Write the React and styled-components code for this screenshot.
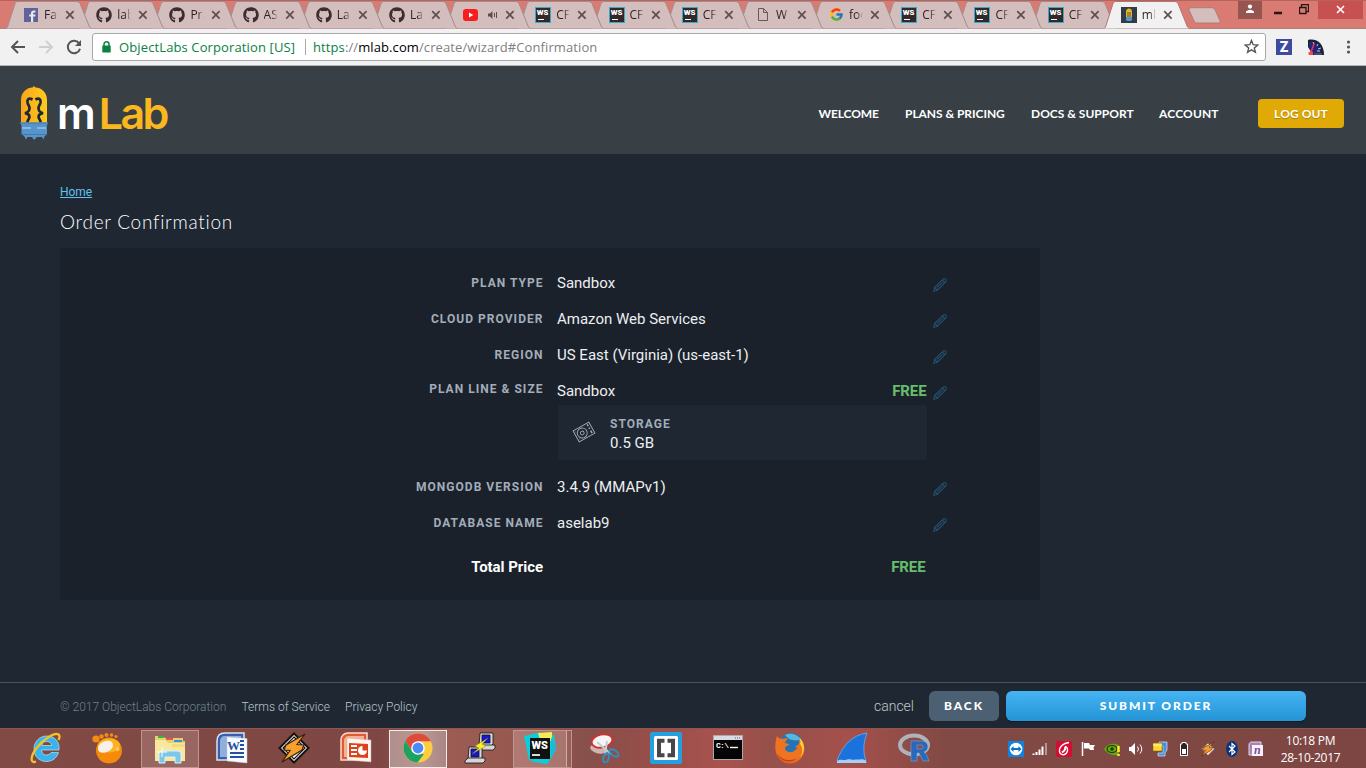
import React from 'react';
import styled, { createGlobalStyle, css } from 'styled-components';
import { FaGithub } from 'react-icons/fa';
import { FcGoogle } from 'react-icons/fc';

const Global = createGlobalStyle`
  * { box-sizing: border-box; }
  body { margin: 0; background: #1e2732; overflow: hidden; }
  svg { display: block; flex: none; }
`;

const ui = '"Open Sans", "Noto Sans", sans-serif';
const museo = 'Lato, "Open Sans", sans-serif';
const roboto = 'Roboto, "Liberation Sans", sans-serif';

const Screen = styled.div`
  width: 1366px;
  height: 768px;
  display: flex;
  flex-direction: column;
`;

/* ---------- browser tabs ---------- */
const TabStrip = styled.div`
  height: 29px;
  flex: none;
  display: flex;
  align-items: flex-start;
  padding-left: 6px;
  background: #d97b72;
  border-top: 1px solid #b4645c;
  border-bottom: 1px solid #a98280;
`;
const Tab = styled.div`
  position: relative;
  flex: none;
  width: 73.2px;
  height: 28px;
  z-index: ${(p) => p.$z};
`;
const TabShape = styled.svg`
  position: absolute;
  left: 0;
  top: 0;
`;
const TabBody = styled.div`
  position: relative;
  display: flex;
  align-items: center;
  width: 85px;
  height: 27px;
  padding-left: 17px;
`;
const TabTitle = styled.span`
  width: 14px;
  margin-left: 5px;
  overflow: hidden;
  white-space: nowrap;
  font: 12px/16px ${ui};
  color: #2c2224;
  mask-image: linear-gradient(90deg, #000 55%, transparent);
`;
const TabClose = styled.svg`
  margin-left: 7px;
`;
const NewTab = styled.svg`
  margin: 6px 0 0 11px;
`;
const WindowControls = styled.div`
  display: flex;
  margin-left: auto;
  padding-right: 3px;
`;
const ControlButton = styled.div`
  width: ${(p) => p.$w}px;
  height: 18px;
  display: flex;
  align-items: center;
  justify-content: center;
  background: ${(p) => p.$bg || 'transparent'};
`;

/* ---------- address bar ---------- */
const Toolbar = styled.div`
  height: 37px;
  flex: none;
  display: flex;
  align-items: center;
  padding: 0 0 1px 10px;
  background: #f2f1f1;
  border-bottom: 1px solid #b5b4b4;
`;
const NavIcons = styled.div`
  display: flex;
  gap: 12px;
  width: 82px;
`;
const AddressBox = styled.div`
  width: 1174px;
  height: 28px;
  display: flex;
  align-items: center;
  padding: 0 6px 0 9px;
  border: 1px solid #a7a7a7;
  border-radius: 3px;
  background: #fff;
  font: 13px/18px ${ui};
`;
const Company = styled.span`
  width: 186px;
  margin-left: 8px;
  color: #0b8043;
  letter-spacing: 0.12px;
  white-space: nowrap;
`;
const Divider = styled.span`
  width: 1px;
  height: 16px;
  margin-right: 7px;
  background: #a8a8a8;
`;
const Url = styled.span`
  flex: 1;
  color: #808080;
  letter-spacing: 0.1px;
  white-space: nowrap;
`;
const Scheme = styled.span`
  color: #0b8043;
`;
const Host = styled.span`
  color: #000;
`;
const Extensions = styled.div`
  display: flex;
  align-items: center;
  padding-left: 10px;
  gap: 16px;
`;
const ZTile = styled.div`
  width: 16px;
  height: 16px;
  background: #3c4ba0;
  color: #fff;
  text-align: center;
  font: 900 14px/16px ${roboto};
`;

/* ---------- site header ---------- */
const SiteHeader = styled.header`
  height: 88px;
  flex: none;
  display: flex;
  align-items: center;
  padding: 0 22px 0 20px;
  background: #384046;
`;
const Brand = styled.div`
  display: flex;
  align-items: center;
  height: 56px;
  padding-top: 5px;
`;
const BrandName = styled.span`
  margin-left: 9px;
  font: 600 43px/56px Inter, sans-serif;
  letter-spacing: -1px;
  color: #fff;
`;
const BrandAccent = styled.span`
  margin-left: 4px;
  letter-spacing: -2.6px;
  color: #fab71e;
`;
const SiteNav = styled.nav`
  display: flex;
  align-items: center;
  margin-left: auto;
`;
const NavLink = styled.a`
  width: ${(p) => p.$w}px;
  font: 700 12px/16px ${museo};
  letter-spacing: ${(p) => p.$ls || 0}px;
  color: #fff;
  white-space: nowrap;
  padding-top: 8px;
`;
const LogOut = styled.button`
  width: 86px;
  height: 29px;
  margin-top: 7px;
  padding: 0;
  border: 0;
  border-radius: 4px;
  background: #e0a906;
  color: #fff;
  font: 700 12px/29px ${museo};
  letter-spacing: 0.1px;
  text-shadow: 0 1px 1px rgba(0, 0, 0, 0.25);
`;

/* ---------- page body ---------- */
const Main = styled.main`
  height: 528px;
  flex: none;
  padding: 30px 60px 0;
  background: #1e2732;
`;
const Crumb = styled.a`
  display: block;
  width: max-content;
  font: 400 12px/16px ${roboto};
  letter-spacing: -0.05px;
  color: #62c1ee;
  text-decoration: underline;
`;
const Title = styled.h1`
  margin: 9px 0 13px;
  font: 300 19px/26px ${museo};
  letter-spacing: 0.72px;
  color: #fff;
`;
const Panel = styled.section`
  width: 980px;
  height: 352px;
  padding: 17px 0 0;
  border-radius: 3px;
  background: #1a212a;
`;
const Row = styled.div`
  display: flex;
  align-items: flex-start;
  height: ${(p) => p.$h || 36}px;
`;
const Label = styled.div`
  width: 484px;
  padding-top: ${(p) => (p.$raised ? 8 : 10)}px;
  padding-right: 0.5px;
  text-align: right;
  font: 700 12px/16px ${roboto};
  letter-spacing: 1.03px;
  color: #a3adba;
`;
const Value = styled.div`
  width: 370px;
  margin-left: 13px;
  padding-top: 8px;
  font: 400 15px/20px ${roboto};
  color: #eceff2;
`;
const Line = styled.div`
  display: flex;
  justify-content: space-between;
`;
const Free = styled.span`
  padding-right: 0.5px;
  font: 700 15px/20px ${roboto};
  letter-spacing: -0.1px;
  color: #67bd6c;
`;
const Edit = styled.div`
  padding: 12px 0 0 5px;
`;
const StorageCard = styled.div`
  display: flex;
  align-items: center;
  width: 369px;
  height: 55px;
  margin: 4px 0 0 1px;
  padding-left: 14px;
  border-radius: 3px;
  background: #1e2732;
`;
const DriveSlot = styled.div`
  padding-bottom: 2px;
`;
const StorageText = styled.div`
  margin-left: 14px;
  padding-top: 2px;
`;
const StorageLabel = styled.div`
  font: 700 12px/18px ${roboto};
  letter-spacing: 1.05px;
  color: #a3adba;
`;
const StorageValue = styled.div`
  font: 400 15px/20px ${roboto};
  color: #eceff2;
`;
const TotalRow = styled.div`
  display: flex;
  padding-top: 16px;
`;
const TotalLabel = styled.div`
  width: 483px;
  text-align: right;
  font: 700 15px/20px ${roboto};
  letter-spacing: -0.05px;
  color: #fff;
`;
const TotalValue = styled.div`
  width: 383px;
  text-align: right;
`;

/* ---------- page footer ---------- */
const Footer = styled.footer`
  height: 46px;
  flex: none;
  display: flex;
  align-items: center;
  padding: 0 60px;
  border-top: 1px solid #4b545e;
  background: #1e2732;
  font: 300 12px/16px ${roboto};
  color: #bcc6d0;
`;
const Copyright = styled.span`
  width: 181.5px;
  padding-top: 2px;
  color: #74808b;
`;
const FooterLink = styled.a`
  width: ${(p) => p.$w}px;
  padding-top: 2px;
  white-space: nowrap;
`;
const Cancel = styled.a`
  margin-left: auto;
  margin-right: 15px;
  font: 300 14px/18px ${roboto};
  color: #c0c7ce;
`;
const ActionButton = styled.button`
  width: ${(p) => p.$w}px;
  height: 30px;
  padding: 0;
  border: 0;
  border-radius: 6px;
  color: #fff;
  font: 900 12px/30px ${museo};
  letter-spacing: 1.9px;
  background: #4c6074;
  ${(p) =>
    p.$primary &&
    css`
      margin-left: 7px;
      background: linear-gradient(#46b4f3, #2494d6);
      box-shadow: 0 1px 1px #14181e;
    `}
`;

/* ---------- taskbar ---------- */
const Taskbar = styled.div`
  height: 40px;
  flex: none;
  display: flex;
  padding-left: 15px;
  border-top: 1px solid #8e5650;
  background: linear-gradient(90deg, #824a44 0, #7f4743 380px, #9c5c53 450px, #96584f 510px, #87504a 590px, #954e49 640px, #a9524e 720px, #96504a 770px, #a5504b 850px, #8b4b46 920px, #824a44 945px, #7d4642 1366px);
`;
const AppSlot = styled.div`
  width: 62px;
  height: 39px;
  display: flex;
  align-items: center;
  justify-content: center;
`;
const AppFrame = styled.div`
  width: 58px;
  height: 38px;
  display: flex;
  align-items: center;
  justify-content: center;
  padding-bottom: 2px;
  ${(p) =>
    p.$state &&
    css`
      border: 1px solid ${p.$state === 'active' ? '#f3ebe9' : '#bd9692'};
      background: ${p.$state === 'active' ? 'linear-gradient(90deg,#b08f8c,#b99793 60%,#a98683)' : 'rgba(255,220,215,0.2)'};
    `}
  ${(p) =>
    p.$state === 'stacked' &&
    css`
      border-right: 1px solid #bd9692;
      width: 59px;
      padding-right: 5px;
      background: linear-gradient(90deg, rgba(255,220,215,.25) 52px, #d5aaa5 52px, #d5aaa5 53px, rgba(255,220,215,.1) 53px);
    `}
`;
const Tray = styled.div`
  display: flex;
  align-items: center;
  margin-left: auto;
`;
const TraySlot = styled.div`
  width: 24px;
  display: flex;
  justify-content: center;
`;
const Clock = styled.div`
  width: 98px;
  padding: 1px 13px 0 0;
  text-align: center;
  font: 12px/17px ${ui};
  letter-spacing: -0.3px;
  color: #fff;
  white-space: nowrap;
`;

/* ---------- icons ---------- */
const Facebook = () => (
  <svg width="14" height="14" viewBox="0 0 14 14">
    <rect width="14" height="14" fill="#5e6399" />
    <path d="M9.2 14V8.6h2l.3-2H9.200V5.400c0-.7.3-1 1-1h1.300V2.500H9.700C7.900 2.500 7 3.500 7 5.200v1.400H5.200v2H7V14z" fill="#ece4ea" />
  </svg>
);
const YouTube = () => (
  <svg width="15" height="12" viewBox="0 0 15 12">
    <rect width="15" height="12" rx="3" fill="#f61e1e" />
    <path d="M6 3.500l4.300 2.500L6 8.500z" fill="#fff" />
  </svg>
);
const Speaker = () => (
  <svg width="11" height="10" viewBox="0 0 11 10">
    <path d="M1 3.500h2L5.500 1v8L3 6.500H1z" fill="#5d4b4d" />
    <path d="M7.500 3v4M9.500 2v6" stroke="#5d4b4d" fill="none" />
  </svg>
);
const WebStormTile = () => (
  <svg width="16" height="16" viewBox="0 0 16 16">
    <rect x=".5" y=".5" width="15" height="15" fill="#33282a" stroke="#2eaecb" />
    <text x="1.800" y="8.300" fontFamily="Roboto" fontWeight="900" fontSize="7.800" fill="#fff">WS</text>
    <path d="M3 12.500h6" stroke="#fff" />
  </svg>
);
const Doc = () => (
  <svg width="12" height="15" viewBox="0 0 12 15">
    <path d="M1.500 1.500h5l4 4v8h-9zM6.500 1.500v4h4" fill="none" stroke="#6a5657" />
  </svg>
);
const MiniMlab = () => (
  <svg width="16" height="16" viewBox="0 0 16 16">
    <rect width="16" height="16" fill="#303c47" />
    <path d="M5 10V5a3 3.500 0 016 0v5z" fill="#e7b52c" />
    <path d="M7 10V5M9 10V5" stroke="#463b20" strokeWidth=".8" />
    <path d="M5 10h6v3l-1 1H6l-1-1z" fill="#5096cf" />
  </svg>
);
const Close = ({ color = '#5f4e50' }) => (
  <TabClose width="10" height="10" viewBox="0 0 10 10">
    <path d="M1.200 1.200l7.400 7.400M8.600 1.200L1.200 8.600" stroke={color} strokeWidth="1.700" />
  </TabClose>
);
const Back = ({ color, flip }) => (
  <svg width="16" height="16" viewBox="0 0 16 16">
    <path d={flip ? 'M1 8h13M8 2l6 6-6 6' : 'M15 8H2M8 2L2 8l6 6'} fill="none" stroke={color} strokeWidth="2" />
  </svg>
);
const Reload = () => (
  <svg width="16" height="16" viewBox="0 0 16 16">
    <path d="M13.300 4.700A6.200 6.200 0 1014 9.700" fill="none" stroke="#555" strokeWidth="2" />
    <path d="M15 1v6H9z" fill="#555" />
  </svg>
);
const Lock = () => (
  <svg width="9" height="12" viewBox="0 0 9 12">
    <path d="M2 6V3.300a2.500 2.500 0 015 0V6" fill="none" stroke="#0b8043" strokeWidth="1.500" />
    <rect x=".3" y="4.500" width="8.400" height="7" rx=".6" fill="#0b8043" />
  </svg>
);
const Star = () => (
  <svg width="15" height="15" viewBox="0 0 15 15">
    <path d="M7.500 1.500l1.700 4.200 4.600.3-3.500 2.900 1.100 4.400-3.900-2.400-3.900 2.400 1.100-4.400L1.200 6l4.600-.3z" fill="none" stroke="#555" strokeWidth="1.400" />
  </svg>
);
const Gauge = () => (
  <svg width="16" height="16" viewBox="0 0 16 16">
    <path d="M0 8V1C9-1 16 5 16 16H5z" fill="#1d2030" />
    <path d="M1 9V3c7-1 12 4 12 11H5z" fill="#24267a" />
    <path d="M5 3l1 2M10 5L9 7M13 9l-3 1M9 12h3" stroke="#c4c8df" />
    <path d="M2.500 14L6 5" stroke="#f53545" strokeWidth="1.500" />
    <path d="M0 13.500l5-1V16H1z" fill="#f24654" />
    <path d="M6 14h8v2H6z" fill="#4c4a57" />
  </svg>
);
const Dots = () => (
  <svg width="16" height="14" viewBox="0 0 16 14">
    <circle cx="8.500" cy="2" r="1.600" fill="#555" />
    <circle cx="8.500" cy="7" r="1.600" fill="#555" />
    <circle cx="8.500" cy="12" r="1.600" fill="#555" />
  </svg>
);
const Bulb = () => (
  <svg width="28" height="54" viewBox="0 0 28 54">
    <defs>
      <linearGradient id="glass">
        <stop offset="0" stopColor="#f8a51d" />
        <stop offset="1" stopColor="#ffcb1b" />
      </linearGradient>
    </defs>
    <path d="M1 38V14C1 7 6 2 12.500 1.600L14 0l1.500 1.600C22 2 27 7 27 14v24z" fill="url(#glass)" />
    <path d="M12.600 13.500C8.500 11.500 7 13.500 7.500 16.500c.5 2.500 2.200 3.500 2 6-.2 2.200-1.500 4-4.500 4.700 3.500.6 4.700 1.800 4.400 4-.2 2-1.900 2.500-2 5.300M15.400 13.500C19.500 11.500 21 13.500 20.500 16.500c-.5 2.500-2.200 3.500-2 6 .2 2.200 1.500 4 4.500 4.700-3.500.6-4.700 1.800-4.400 4 .2 2 1.900 2.500 2 5.300" fill="none" stroke="#19293a" strokeWidth="2.700" />
    <path d="M0 36.500h28l-1 3v8.500l-2.500 2.500-1 3-1.500-2.500h-5L14 54l-2-3H7.500L6 53.500l-1.500-3L1.500 48V39.500z" fill="#5794cc" />
    <path d="M0 37h28M2 48.500h24" stroke="#4079ae" />
    <path d="M2 42h9M17 42h9" stroke="#93c5ee" strokeWidth="1.500" />
  </svg>
);
const Pencil = () => (
  <svg width="16" height="16" viewBox="0 0 16 16">
    <path d="M1.700 14.300l1-4 8.500-8.200c1.800-1.500 4 .600 2.700 2.500L5.400 13.200zM2.700 10.300l2.700 2.900M10.200 3l3 3M4.900 10.700l5.500-5.300" fill="none" stroke="#23506f" strokeWidth="1.100" />
  </svg>
);
const Drive = () => (
  <svg width="24" height="24" viewBox="0 0 24 24">
    <g transform="rotate(-29 12 12)" fill="none" stroke="#a4adb6" strokeWidth=".9">
      <rect x="3" y="5.700" width="18" height="12.600" />
      <circle cx="10" cy="12" r="5" />
      <circle cx="10" cy="12" r="1.900" />
      <path d="M18.500 7v2M18.500 10.500v1.500M18.500 14v3" strokeWidth="1.500" />
      <path d="M4.500 8h.7M4.500 16h.7" />
    </g>
  </svg>
);

const IE = () => (
  <svg width="32" height="32" viewBox="0 0 32 32">
    <path d="M29 18H11.500c.3 3.300 2.200 5 5 5 2.200 0 3.600-1 4.500-2.400h7.500C26.700 26 22.500 29.500 16.500 29.500 9 29.500 4 24 4 17S9.400 4 16.800 4C24.500 4 30 9.600 29 18zM11.700 13.500h10c-.4-2.600-2.200-4-5-4s-4.500 1.500-5 4z" fill="#38b3ec" stroke="#b8e8fb" strokeWidth=".7" />
    <path d="M6 29.500c-6 2.500-6-5 1-14C14 6.500 25 0 28.500 2.500c1.500 1 1 3.500 0 5.500" fill="none" stroke="#f4c321" strokeWidth="2.300" />
  </svg>
);
const Gom = () => (
  <svg width="32" height="32" viewBox="0 0 32 32">
    <circle cx="17" cy="18.500" r="13" fill="#f58a0b" />
    <ellipse cx="17" cy="13.500" rx="11" ry="7" fill="#ffb01f" />
    <circle cx="4" cy="7" r="3.600" fill="#f68d13" />
    <circle cx="9.500" cy="4.500" r="2.200" fill="#f68d13" /><circle cx="14.500" cy="3" r="2" fill="#f68d13" />
    <circle cx="19.500" cy="3" r="1.800" fill="#f68d13" /><circle cx="24" cy="4.500" r="1.600" fill="#f68d13" />
    <ellipse cx="13.500" cy="15" rx="8" ry="5.500" transform="rotate(-25 13 15)" fill="#f8f2e6" />
    <circle cx="25.500" cy="17" r="2" fill="#ffc978" />
  </svg>
);
const Explorer = () => (
  <svg width="34" height="32" viewBox="0 0 34 32">
    <path d="M2 4h8l2 2h18v3h2v20H2z" fill="#e9cf6c" />
    <path d="M5 4h6v2H5z" fill="#35b548" /><path d="M13 6h7v2h-7z" fill="#e45647" /><path d="M21 8h8v2h-8z" fill="#3592e0" />
    <path d="M2 8h10l3 3h17v18H2z" fill="#f8e89f" />
    <path d="M19 12h13v3H19z" fill="#f3db7d" />
    <path d="M6 31v-8c0-3 1-4 4-4h14c3 0 4 1 4 4v8h-6v-6H12v6z" fill="#7cc7e7" stroke="#d7f2fc" />
    <path d="M9 15v10M4 20h10" stroke="#fff" />
  </svg>
);
const Word = () => (
  <svg width="32" height="32" viewBox="0 0 32 32">
    <path d="M1 28V9c0-5 3-8 8-8h19v27z" fill="#375fa9" stroke="#d8e3f5" strokeWidth="1.500" />
    <path d="M4 25V9c0-3 2-5 5-5h16v21z" fill="#90aedb" />
    <path d="M11 5l20 1.500V31l-20-2z" fill="#f8faff" stroke="#b8c4dc" strokeWidth=".5" />
    <text x="11" y="18" fontFamily="Liberation Serif" fontSize="13" fontWeight="700" fill="#26509f">W</text>
    <path d="M24 9h4M24 13h4M24 17h4M14 21h14M14 25h14" stroke="#26509f" strokeWidth="2" />
  </svg>
);
const Winamp = () => (
  <svg width="32" height="32" viewBox="0 0 32 32">
    <path d="M16 1.500L30.500 16 16 30.500 1.500 16z" fill="#f6f6f6" stroke="#171310" strokeWidth="2" />
    <path d="M16 5l11 11-11 11L5 16z" fill="none" stroke="#171310" strokeWidth="1.200" />
    <path d="M27 2L8 13l-2 5 6 .5L4 30l20-12 2-5-7-.5z" fill="#f7a12a" stroke="#38200c" strokeWidth="1.200" />
  </svg>
);
const TrayBolt = () => (
  <svg width="16" height="16" viewBox="0 0 16 16">
    <path d="M8 2l6.500 6L8 14.500 1.500 8z" fill="#f3e6dd" stroke="#5d3a30" strokeWidth=".5" />
    <path d="M14.500 1L3.500 6.500l-1 2.700 3 .3L1.500 15l10-6 1-2.500-3.500-.3z" fill="#f79a2a" stroke="#4a2510" strokeWidth=".6" />
  </svg>
);
const PowerPoint = () => (
  <svg width="32" height="32" viewBox="0 0 32 32">
    <path d="M1 28V8c0-4 3-7 7-7h19v27z" fill="#e15b32" stroke="#fbddcf" strokeWidth="1.500" />
    <path d="M4 25V9c0-3 2-5 5-5h15v21z" fill="#f3b398" />
    <path d="M7 6l24 2v22L7 28z" fill="#fff5ef" stroke="#d5aa98" strokeWidth=".5" />
    <path d="M9 11l19 1v14L9 25z" fill="#dc421b" />
    <path d="M11 14h6M11 18h6M11 22h6" stroke="#fff" strokeWidth="2" />
    <circle cx="22.500" cy="18.500" r="4.500" fill="#fff" /><path d="M22.500 18.500V13.500L27 14v4.500z" fill="#dc421b" />
  </svg>
);
const Chrome = () => (
  <svg width="32" height="32" viewBox="0 0 32 32">
    <circle cx="16" cy="16" r="14.500" fill="#ffcd42" />
    <path d="M16 9.300h12.900A14.500 14.500 0 003.400 8.800l6.700 10.400z" fill="#de4b3d" />
    <path d="M3.400 8.800A14.500 14.500 0 0015.600 30.500l6.200-8.200-11.800-3z" fill="#1ca261" />
    <circle cx="16" cy="16" r="6.800" fill="#fff" /><circle cx="16" cy="16" r="5.400" fill="#4c8bf5" />
  </svg>
);
const Putty = () => (
  <svg width="32" height="32" viewBox="0 0 32 32">
    <g stroke="#111" strokeWidth=".8">
      <path d="M16 1h13v11l-2 2H15z" fill="#d8d8d8" /><path d="M18 3h8v8h-8z" fill="#1616d8" />
      <path d="M15 13h16v3l-2 2H13z" fill="#d6d6d6" />
      <path d="M5 15h13v11l-2 2H4z" fill="#d8d8d8" /><path d="M7 17h8v8H7z" fill="#1616d8" />
      <path d="M4 26h17v3l-2 2H1v-2z" fill="#d6d6d6" />
      <path d="M24 6L11 14l4 2-7 6 14-8-4-2z" fill="#f9ee22" stroke="#7f7600" strokeWidth=".4" />
    </g>
  </svg>
);
const WebStorm = () => (
  <svg width="34" height="34" viewBox="0 0 34 34">
    <path d="M1 5l13-3 17 2 2 14-6 11-3 4-13-2-5-2z" fill="#0bcedb" />
    <path d="M15 2l14-1v9L17 9z" fill="#f5ed55" /><path d="M28 6l5 11-5 8z" fill="#18b9da" />
    <path d="M7 7h20v21H7z" fill="#111" />
    <text x="8.500" y="18" fontSize="11" fontFamily="Roboto" fontWeight="900" fill="#fff">WS</text>
    <path d="M9 24h8" stroke="#fff" strokeWidth="1.700" />
  </svg>
);
const Snip = () => (
  <svg width="32" height="32" viewBox="0 0 32 32">
    <ellipse cx="10" cy="17" rx="8" ry="4.500" transform="rotate(15 10 17)" fill="#cdb5b2" />
    <ellipse cx="14" cy="9" rx="10.500" ry="6.500" transform="rotate(-12 14 9)" fill="#f5f5f5" stroke="#d3312c" strokeWidth="1.800" />
    <path d="M9 10l14 12M19 9l-2 14" stroke="#c3ced6" strokeWidth="2" />
    <ellipse cx="26" cy="21" rx="5" ry="2.800" transform="rotate(35 26 21)" fill="none" stroke="#2c91c5" strokeWidth="2" />
    <ellipse cx="18" cy="26" rx="2.700" ry="4.500" transform="rotate(15 18 26)" fill="none" stroke="#2c91c5" strokeWidth="2" />
  </svg>
);
const Brackets = () => (
  <svg width="32" height="32" viewBox="0 0 32 32">
    <rect width="32" height="32" rx="2" fill="#249fdf" />
    <rect x="4" y="4" width="24" height="24" rx="1.500" fill="#fff" />
    <path d="M14.500 8.800H9v14.400h5.500M17.500 8.800H23v14.400h-5.500" fill="none" stroke="#474747" strokeWidth="4" />
  </svg>
);
const Cmd = () => (
  <svg width="30" height="25" viewBox="0 0 30 25">
    <rect x=".5" y=".5" width="29" height="24" fill="#050505" stroke="#aaa" />
    <path d="M1 1h28v4H1z" fill="#d7dce2" /><path d="M22 3h5" stroke="#4a6190" strokeDasharray="1 1" />
    <text x="3" y="13" fontFamily="Liberation Mono" fontSize="8" fontWeight="700" fill="#fff" textLength="13">C:\</text>
    <path d="M17 12.500h8" stroke="#fff" strokeWidth="1.400" />
  </svg>
);
const Firefox = () => (
  <svg width="32" height="32" viewBox="0 0 32 32">
    <circle cx="16" cy="17" r="14.500" fill="#e9671f" />
    <circle cx="17" cy="12.500" r="11.500" fill="#2473b5" />
    <path d="M11 3c5-3 14-1 16 6-4-2-10 2-16-6z" fill="#55b8de" />
    <path d="M3 4c1 2 3 3 5 3 2-1 5-1 6 0-2 1-3 3-3 4l4 1c0 2-4 2-4 4 0 4 7 6 10 2 3-1 2-3 0-4 3 0 5-2 4-7 6 5 6 14 1 19C18 32 3 28 1.500 17 1 12 2 7 3 4z" fill="#ef7422" />
    <path d="M25 5c6 6 7 14 1 21 3-6 3-10 0-14 1-2 0-5-1-7z" fill="#fbd336" />
    <path d="M3 22c5 6 12 8 20 4-6 6-16 4-20-4z" fill="#d33920" />
  </svg>
);
const Wireshark = () => (
  <svg width="32" height="32" viewBox="0 0 32 32">
    <path d="M1 29C6 14 16 3 31 1c-4 10-4 20-1 28z" fill="#1c72dd" stroke="#75b5f8" strokeWidth=".7" />
    <path d="M1 29c3-2 6-1 8-1s3-1 6-.5 4 0 7 0 4-1 8 1l.5 2.500H1z" fill="#a9cef5" />
  </svg>
);
const RLogo = () => (
  <svg width="34" height="30" viewBox="0 0 34 30">
    <ellipse cx="17" cy="12" rx="14" ry="9.500" fill="none" stroke="#aeb3ba" strokeWidth="4" />
    <path d="M14 28V8h11c7 0 8 9 2 11 2 1 3 4 5 9h-6l-4-8h-2v8zM20 12v4h4c3 0 3-4 0-4z" fill="#2669bd" stroke="#8fb0d8" strokeWidth=".5" fillRule="evenodd" />
  </svg>
);

const traySvgs = [
  <svg width="16" height="16" viewBox="0 0 16 16"><rect width="16" height="16" fill="#0d82df" /><circle cx="8" cy="8" r="6.300" fill="#fff" /><path d="M2.500 8l3-3v2h5V5l3 3-3 3V9h-5v2z" fill="#0d72ca" /></svg>,
  <svg width="16" height="14" viewBox="0 0 16 14"><path d="M1.500 13v-1.500M4.500 13v-3M7.500 13V7.500M10.500 13V4.500" stroke="#fff" strokeWidth="2" /><path d="M14 13V1" stroke="#b79591" strokeWidth="2" /></svg>,
  <svg width="16" height="16" viewBox="0 0 16 16"><rect width="16" height="16" rx="2" fill="#d50b34" /><path d="M13 1.500C7 2 3 6 3.500 10.500 4 14 8.500 15 10.500 12c2-3 1-6.500-1.500-6.500" fill="none" stroke="#fff" strokeWidth="1.400" /><path d="M9 5.500c1 2 0 4-3 6" fill="none" stroke="#fff" strokeWidth="2" /></svg>,
  <svg width="16" height="16" viewBox="0 0 16 16"><path d="M2.500 1v14" stroke="#fff" strokeWidth="1.500" /><path d="M4 2h5l1 2h5l-1.500 2.500L14 9h-4L9 7.500H4z" fill="#fff" /></svg>,
  <svg width="17" height="16" viewBox="0 0 17 16"><path d="M0 8c4-6 10-6 15-4v10C9 15 3 13 0 8z" fill="#66a618" /><ellipse cx="8" cy="8" rx="5" ry="3.500" fill="none" stroke="#203805" strokeWidth="1.200" /><circle cx="8" cy="8" r="1.700" fill="#203805" /><path d="M14.500 5v6M14.500 13v2" stroke="#ffea29" strokeWidth="2.500" /></svg>,
  <svg width="16" height="14" viewBox="0 0 16 14"><path d="M1 5h2l4-4v12L3 9H1z" fill="#fff" /><path d="M9.500 4.500q2 2.500 0 5M12 2.500q3.500 4.500 0 9" stroke="#fff" fill="none" /></svg>,
  <svg width="16" height="16" viewBox="0 0 16 16"><path d="M7 1h8v8l-2 3v3H6v-3h5V5H7z" fill="#4392e4" stroke="#d9e8fa" strokeWidth=".7" /><path d="M1 2h9v8H1z" fill="#ffd72f" stroke="#755f15" strokeWidth=".5" /><path d="M1 4h9" stroke="#fff7b1" /></svg>,
  <svg width="10" height="16" viewBox="0 0 10 16"><path d="M3 1.500h4v1.500h1.500v11.500h-7V3H3z" fill="#2d2423" stroke="#fff" /><path d="M3 8h4v5H3z" fill="#fff" /></svg>,
  <TrayBolt />,
  <svg width="12" height="16" viewBox="0 0 12 16"><ellipse cx="6" cy="8" rx="5.800" ry="8" fill="#07337a" /><path d="M3 5l6 6-3 2.500v-11L9 5l-6 6" fill="none" stroke="#fff" strokeWidth="1.200" /></svg>,
  <svg width="16" height="16" viewBox="0 0 16 16"><path d="M1 14V4c0-2 1-3 3-3h9v13z" fill="#a585b5" stroke="#e7d6ee" /><path d="M4 4h11v11H4z" fill="#fcf2ff" /><text x="6" y="13" fontFamily="Liberation Serif" fontStyle="italic" fontWeight="700" fontSize="12" fill="#775291">n</text></svg>,
];

const gh = <FaGithub size={16} color="#3b2c2e" />;
const ws = <WebStormTile />;
const tabs = [
  { icon: <Facebook />, title: 'Fac' }, { icon: gh, title: 'lab' }, { icon: gh, title: 'Pra' }, { icon: gh, title: 'AS' },
  { icon: gh, title: 'La' }, { icon: gh, title: 'La' }, { icon: <YouTube />, audio: true }, { icon: ws, title: 'CF' },
  { icon: ws, title: 'CF' }, { icon: ws, title: 'CF' }, { icon: <Doc />, title: 'W' }, { icon: <FcGoogle size={15} />, title: 'foo' },
  { icon: ws, title: 'CF' }, { icon: ws, title: 'CF' }, { icon: ws, title: 'CF' }, { icon: <MiniMlab />, title: 'ml', active: true },
];
const IconSlot = styled.div`
  width: 16px;
  display: flex;
  justify-content: center;
`;
const AudioSlot = styled.div`
  width: 15px;
  margin-left: 5px;
  display: flex;
  justify-content: flex-end;
`;

const apps = [
  [<IE />], [<Gom />], [<Explorer />, 'open'], [<Word />], [<Winamp />], [<PowerPoint />], [<Chrome />, 'active'],
  [<Putty />], [<WebStorm />, 'stacked'], [<Snip />], [<Brackets />], [<Cmd />], [<Firefox />], [<Wireshark />], [<RLogo />],
];

function DetailRow({ label, children }) {
  return (
    <Row>
      <Label>{label}</Label>
      <Value>{children}</Value>
      <Edit><Pencil /></Edit>
    </Row>
  );
}

export default function App() {
  return (
    <Screen>
      <Global />
      <TabStrip>
        {tabs.map((t, i) => (
          <Tab key={i} $z={t.active ? 30 : 20 - i}>
            <TabShape width="87" height="28" viewBox="0 0 87 28">
              <path d="M0 27.500L1.500 26 9 2.500Q9.800 .5 11.500 .5H71Q73 .5 74 2.500L83.500 26l2 1.500z" fill={t.active ? '#f2f1f1' : '#d3bebd'} />
              <path d="M0 27.500L1.500 26 9 2.500Q9.800 .5 11.500 .5H71Q73 .5 74 2.500L83.500 26l2 1.500" fill="none" stroke={t.active ? '#b27772' : '#a58b8a'} />
            </TabShape>
            <TabBody>
              <IconSlot>{t.icon}</IconSlot>
              {t.audio ? <AudioSlot><Speaker /></AudioSlot> : <TabTitle>{t.title}</TabTitle>}
              <Close />
            </TabBody>
          </Tab>
        ))}
        <NewTab width="34" height="18" viewBox="0 0 34 18">
          <path d="M3 .7h21q2 0 3 2l5 11q1 2.300-1 2.300H9q-2 0-3-2L1 3Q.4.700 3 .7z" fill="#d3bebd" stroke="#b17c77" />
        </NewTab>
        <WindowControls>
          <ControlButton $w={24} $bg="#965550">
            <svg width="10" height="12" viewBox="0 0 10 12"><circle cx="5" cy="2.600" r="2.100" fill="#fff" /><path d="M1 9V7.500Q5 4 9 7.500V9z" fill="#fff" /></svg>
          </ControlButton>
          <ControlButton $w={32}>
            <svg width="8" height="10" viewBox="0 0 8 10"><path d="M0 8h8" stroke="#241615" strokeWidth="2.500" /></svg>
          </ControlButton>
          <ControlButton $w={20}>
            <svg width="10" height="12" viewBox="0 0 10 12"><path d="M.5 3.500h6.500v6H.5zM2.500 3.500V.7h7v7H7" fill="none" stroke="#241615" strokeWidth="1.300" /></svg>
          </ControlButton>
          <ControlButton $w={4} />
          <ControlButton $w={45} $bg="#c75050">
            <svg width="9" height="11" viewBox="0 0 9 11"><path d="M1 1l7 7M8 1L1 8" stroke="#fff" strokeWidth="1.600" /></svg>
          </ControlButton>
        </WindowControls>
      </TabStrip>

      <Toolbar>
        <NavIcons>
          <Back color="#555" />
          <Back color="#d0cfcf" flip />
          <Reload />
        </NavIcons>
        <AddressBox>
          <Lock />
          <Company>ObjectLabs Corporation [US]</Company>
          <Divider />
          <Url><Scheme>https</Scheme>://<Host>mlab.com</Host>/create/wizard#Confirmation</Url>
          <Star />
        </AddressBox>
        <Extensions>
          <ZTile>Z</ZTile>
          <Gauge />
          <Dots />
        </Extensions>
      </Toolbar>

      <SiteHeader>
        <Brand>
          <Bulb />
          <BrandName>m<BrandAccent>Lab</BrandAccent></BrandName>
        </Brand>
        <SiteNav>
          <NavLink $w={86.500} $ls={-0.12}>WELCOME</NavLink>
          <NavLink $w={126} $ls={-0.05}>PLANS &amp; PRICING</NavLink>
          <NavLink $w={128}>DOCS &amp; SUPPORT</NavLink>
          <NavLink $w={99} $ls={0.15}>ACCOUNT</NavLink>
          <LogOut>LOG OUT</LogOut>
        </SiteNav>
      </SiteHeader>

      <Main>
        <Crumb>Home</Crumb>
        <Title>Order Confirmation</Title>
        <Panel>
          <DetailRow label="PLAN TYPE">Sandbox</DetailRow>
          <DetailRow label="CLOUD PROVIDER">Amazon Web Services</DetailRow>
          <DetailRow label="REGION">US East (Virginia) (us-east-1)</DetailRow>
          <Row $h={96}>
            <Label $raised>PLAN LINE &amp; SIZE</Label>
            <Value>
              <Line><span>Sandbox</span><Free>FREE</Free></Line>
              <StorageCard>
                <DriveSlot><Drive /></DriveSlot>
                <StorageText>
                  <StorageLabel>STORAGE</StorageLabel>
                  <StorageValue>0.5 GB</StorageValue>
                </StorageText>
              </StorageCard>
            </Value>
            <Edit><Pencil /></Edit>
          </Row>
          <DetailRow label="MONGODB VERSION">3.4.9 (MMAPv1)</DetailRow>
          <DetailRow label="DATABASE NAME">aselab9</DetailRow>
          <TotalRow>
            <TotalLabel>Total Price</TotalLabel>
            <TotalValue><Free>FREE</Free></TotalValue>
          </TotalRow>
        </Panel>
      </Main>

      <Footer>
        <Copyright>© 2017 ObjectLabs Corporation</Copyright>
        <FooterLink $w={103.500}>Terms of Service</FooterLink>
        <FooterLink $w={80}>Privacy Policy</FooterLink>
        <Cancel>cancel</Cancel>
        <ActionButton $w={70}>BACK</ActionButton>
        <ActionButton $w={300} $primary>SUBMIT ORDER</ActionButton>
      </Footer>

      <Taskbar>
        {apps.map(([icon, state], i) => (
          <AppSlot key={i}><AppFrame $state={state}>{icon}</AppFrame></AppSlot>
        ))}
        <Tray>
          {traySvgs.map((icon, i) => <TraySlot key={i}>{icon}</TraySlot>)}
          <Clock>10:18 PM<br />28-10-2017</Clock>
        </Tray>
      </Taskbar>
    </Screen>
  );
}
